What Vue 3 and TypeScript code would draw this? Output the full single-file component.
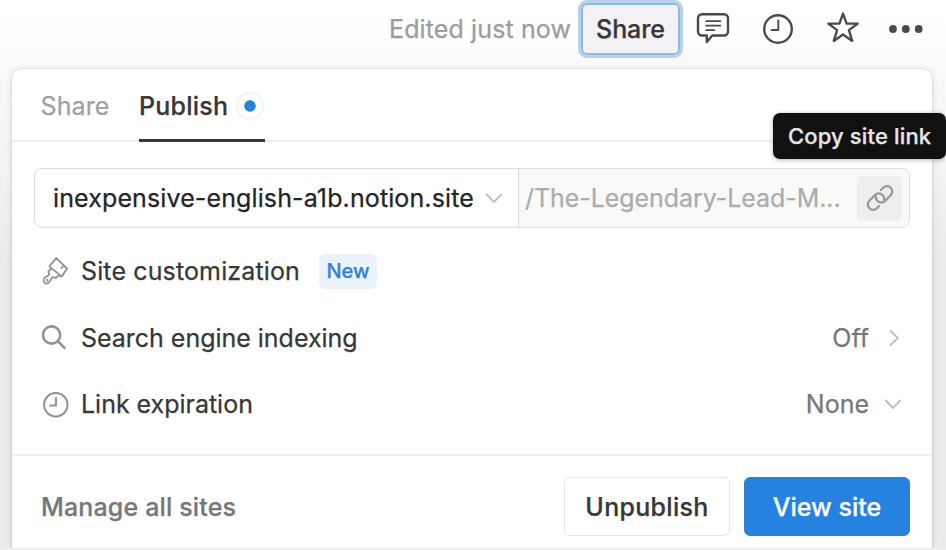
<script setup lang="ts">
import { ref } from 'vue'

type Tab = 'share' | 'publish'
const tab = ref<Tab>('publish')

const domain = 'inexpensive-english-a1b.notion.site'
const slug = '/The-Legendary-Lead-M...'
</script>

<template>
  <div class="screen">
    <header class="topbar">
      <span class="edited">Edited just now</span>
      <button class="share-btn">Share</button>
      <svg class="ico comment" viewBox="0 0 34 34">
        <path d="M6 3.300h22a4 4 0 0 1 4 4v13.200a4 4 0 0 1-4 4H16.300L10.800 31v-6.500H6a4 4 0 0 1-4-4V7.300a4 4 0 0 1 4-4z" />
        <path class="thin" d="M9.500 10.100h15.500M9.500 14.600h15.500M9.500 19.100h9.500" />
      </svg>
      <svg class="ico clock" viewBox="0 0 34 34">
        <circle cx="17" cy="17" r="13.800" />
        <path class="thin" d="M17.300 7.800v10.200H9.800" />
      </svg>
      <svg class="ico star" viewBox="0 0 34 34">
        <path d="M17 2.600l3.600 10h11.100l-8.800 6.500 3.300 10.800L17 23.600l-9.200 6.300 3.300-10.800L2.300 12.600h11.100z" />
      </svg>
      <svg class="dots" viewBox="0 0 34 8">
        <circle cx="4" cy="4" r="3.900" />
        <circle cx="16.800" cy="4" r="3.900" />
        <circle cx="29.700" cy="4" r="3.900" />
      </svg>
    </header>

    <section class="panel">
      <nav class="tabs">
        <span class="tab" :class="{ active: tab === 'share' }" @click="tab = 'share'">Share</span>
        <span class="tab publish" :class="{ active: tab === 'publish' }" @click="tab = 'publish'">
          Publish<i class="badge"></i>
        </span>
      </nav>

      <div class="body">
        <div class="url">
          <div class="domain">
            <span class="domain-text">{{ domain }}</span>
            <svg class="chev" viewBox="0 0 18 18"><path d="M1.200 5l7.800 8 7.800-8" /></svg>
          </div>
          <div class="slug">
            <span>{{ slug }}</span>
            <button class="copy" aria-label="Copy site link">
              <svg viewBox="0 0 32 32">
                <g transform="rotate(-45 16 16)">
                  <path d="M9.500 21H6.500a5.300 5.300 0 0 1 0-10.600h8a5.300 5.300 0 0 1 3.400 9.400" />
                  <path d="M22.500 11H25.500a5.300 5.300 0 0 1 0 10.600h-8a5.300 5.300 0 0 1-3.400-9.400" />
                </g>
              </svg>
            </button>
          </div>
        </div>

        <div class="row">
          <svg class="row-icon brush" viewBox="0 0 26 28">
            <path d="M13.300 1.200L24 11.500l-5.200 8-3.500-1-2.300 2.400-3.700-.8-3.200 5.100a3.200 3.200 0 0 1-5-4l5.200-3.400-.9-3.500 2.500-2.200-1.400-3.100z" />
            <path d="M7.800 10.600l10.600 8.700M20.700 8.500l-2.800 3.200" />
            <circle cx="4" cy="23.200" r=".5" />
          </svg>
          <span class="label wide">Site customization</span>
          <span class="new">New</span>
        </div>
        <div class="row">
          <svg class="row-icon search" viewBox="0 0 26 28">
            <circle cx="9.600" cy="11" r="8.600" />
            <path d="M16 17.300l7.300 7.300" />
          </svg>
          <span class="label">Search engine indexing</span>
          <span class="value">Off</span>
          <svg class="chev" viewBox="0 0 18 18"><path d="M6 1.500L13.800 9 6 16.500" /></svg>
        </div>
        <div class="row">
          <svg class="row-icon timer" viewBox="0 0 26 28">
            <circle cx="12.800" cy="14.700" r="11.700" />
            <path d="M13 7.200v8.300H6.300" />
          </svg>
          <span class="label">Link expiration</span>
          <span class="value">None</span>
          <svg class="chev" viewBox="0 0 18 18"><path d="M1.200 5l7.800 8 7.800-8" /></svg>
        </div>
      </div>

      <footer class="foot">
        <span class="manage">Manage all sites</span>
        <button class="btn unpublish">Unpublish</button>
        <button class="btn primary">View site</button>
      </footer>
    </section>

    <div class="tip">Copy site link</div>
  </div>
</template>

<style>
body {
  background: #fff;
  overflow: hidden;
}
</style>

<style scoped>
* {
  box-sizing: border-box;
}
.screen {
  position: relative;
  width: 946px;
  height: 550px;
  overflow: hidden;
  background: linear-gradient(#fff 0, #fefefe 34px, #fafafa 69px, #f5f5f5 140px, #ebebeb 260px, #ebebeb 548px, #ecf0ea 548px);
  font: 400 25px/30px Inter, sans-serif;
  color: #373737;
  -webkit-text-stroke: 0.25px currentColor;
}
button {
  font: inherit;
  color: inherit;
  border: 0;
  padding: 0;
}
.topbar {
  display: flex;
  align-items: flex-start;
  height: 69px;
  padding-left: 389px;
}
.edited {
  width: 189px;
  padding-top: 14px;
  letter-spacing: 0.12px;
  color: #9c9c9c;
}
.share-btn {
  width: 105px;
  height: 58px;
  font-weight: 500;
  letter-spacing: -0.1px;
  border: 3px solid #b4d2ef;
  border-radius: 9px;
  background: #f3f1f4;
  box-shadow: inset 0 0 0 2px #8fb7e0;
}
.ico {
  width: 34px;
  height: 34px;
  margin-top: 12px;
  fill: none;
  stroke: #4a4a4a;
  stroke-width: 2.4;
  stroke-linejoin: round;
}
.thin {
  stroke-width: 1.9;
}
.comment {
  margin-left: 13px;
  margin-top: 11px;
}
.clock {
  margin-left: 31px;
}
.star {
  margin-left: 31px;
  margin-top: 11px;
}
.dots {
  width: 34px;
  height: 8px;
  margin: 25px 0 0 29px;
  fill: #4a4a4a;
}
.panel {
  display: flex;
  flex-direction: column;
  width: 920px;
  height: 479px;
  margin-left: 12px;
  background: #fff;
  border-radius: 10px 10px 0 0;
  box-shadow: 0 0 2px rgba(0, 0, 0, 0.22), 0 1px 9px rgba(0, 0, 0, 0.1);
  clip-path: inset(-20px -20px 0 -20px);
}
.tabs {
  display: flex;
  height: 73px;
  padding-left: 28.500px;
  border-bottom: 2px solid #efefef;
}
.tab {
  height: 73px;
  padding-top: 22px;
  letter-spacing: 0.1px;
  color: #a0a0a0;
}
.tab.publish {
  display: flex;
  width: 126px;
  margin-left: 29.500px;
  letter-spacing: 0.25px;
}
.tab.active {
  color: #373737;
  font-weight: 500;
  border-bottom: 3px solid #373737;
}
.badge {
  width: 28px;
  height: 28px;
  margin: 1px 0 0 8px;
  border: 2px solid #f4f4f4;
  border-radius: 50%;
  background: radial-gradient(circle, #2782dc 5.2px, #fff 6.2px);
}
.body {
  height: 312px;
  padding: 26px 22px 0;
}
.url {
  display: flex;
  height: 60px;
  margin-bottom: 10px;
  border: 1px solid #dedede;
  border-radius: 8px;
  overflow: hidden;
}
.domain {
  display: flex;
  align-items: center;
  width: 484px;
  padding-left: 18px;
  border-right: 1px solid #d8d8d8;
  letter-spacing: 0.12px;
  color: #242424;
}
.domain-text {
  width: 432px;
}
.chev {
  width: 18px;
  height: 18px;
  fill: none;
  stroke: #bdbdbd;
  stroke-width: 1.8;
}
.slug {
  display: flex;
  flex: 1;
  align-items: center;
  justify-content: space-between;
  padding: 0 7px 0 6px;
  background: #f9f9f9;
  color: #acacac;
  letter-spacing: -0.06px;
}
.copy {
  display: flex;
  align-items: center;
  justify-content: center;
  width: 45px;
  height: 45px;
  border-radius: 5px;
  background: #eeeeee;
}
.copy svg {
  width: 32px;
  height: 32px;
  fill: none;
  stroke: #999;
  stroke-width: 2.3;
  stroke-linecap: round;
}
.row {
  display: flex;
  align-items: center;
  height: 66.5px;
  padding: 0 8px 0 8px;
}
.row-icon {
  width: 26px;
  height: 28px;
  margin-right: 13px;
  fill: none;
  stroke: #929292;
  stroke-width: 2;
  stroke-linejoin: round;
}
.brush {
  margin-left: 1px;
  margin-right: 12px;
  stroke-width: 1.8;
}
.search {
  stroke-width: 2.6;
}
.timer {
  margin-left: 1px;
  margin-right: 12px;
}
.label {
  letter-spacing: -0.02px;
}
.label.wide {
  letter-spacing: 0.13px;
}
.new {
  width: 58px;
  height: 35px;
  margin-left: 19px;
  border-radius: 6px;
  background: #eaf2fb;
  color: #3281d2;
  font-weight: 500;
  font-size: 20px;
  line-height: 35px;
  text-align: center;
}
.value {
  margin-left: auto;
  margin-right: 15px;
  color: #777;
}
.foot {
  display: flex;
  align-items: center;
  height: 94px;
  padding: 9px 22px 0 29px;
  border-top: 2px solid #efefef;
  font-weight: 500;
}
.manage {
  flex: 1;
  letter-spacing: 0.15px;
  color: #777;
}
.btn {
  width: 166px;
  height: 59px;
  border-radius: 6px;
  font-weight: 500;
}
.unpublish {
  margin-right: 14px;
  border: 1.500px solid #e6e6e6;
  background: #fff;
  letter-spacing: 0.3px;
}
.primary {
  background: #2582e0;
  border: 1px solid #397fc5;
  color: #fff;
}
.tip {
  position: absolute;
  left: 773px;
  top: 113px;
  width: 173px;
  height: 46px;
  padding-left: 15px;
  border-radius: 7px;
  background: #111;
  box-shadow: 0 1px 5px rgba(0, 0, 0, 0.3);
  color: #e6e6e6;
  font-weight: 500;
  font-size: 22px;
  line-height: 46px;
  letter-spacing: 0.15px;
  white-space: nowrap;
}
</style>
